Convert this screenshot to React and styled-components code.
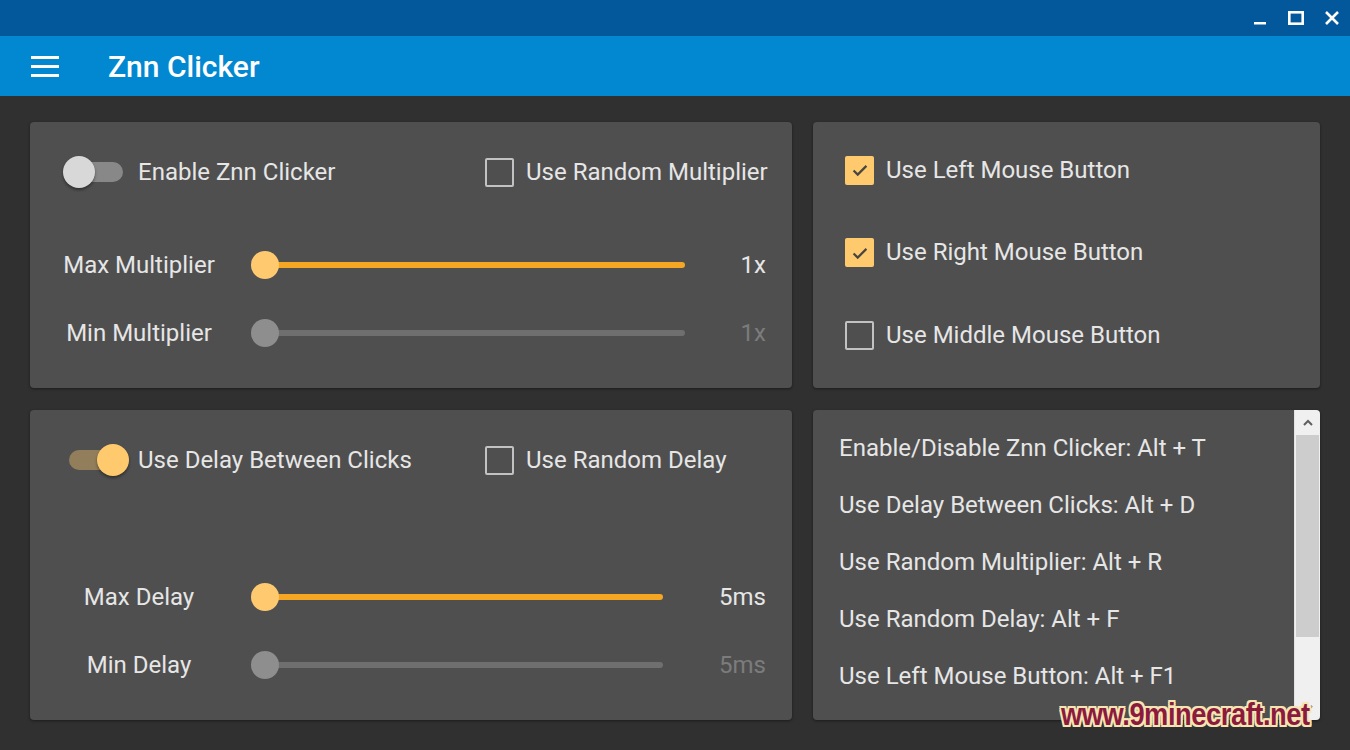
import React from 'react';
import styled, { createGlobalStyle } from 'styled-components';

const GlobalStyle = createGlobalStyle`
  body {
    margin: 0;
    background: #303030;
    font-family: Roboto, "Noto Sans", sans-serif;
  }
`;

const Window = styled.div`
  position: relative;
  width: 1350px;
  height: 750px;
  overflow: hidden;
  background: #303030;
  color: #e6e6e6;
`;

const TitleBar = styled.div`
  display: flex;
  justify-content: flex-end;
  height: 36px;
  background: #03579b;
`;

const WindowButton = styled.div`
  display: flex;
  align-items: center;
  justify-content: center;
  width: 36px;
  height: 36px;
  color: #ffffff;
`;

const AppBar = styled.header`
  display: flex;
  align-items: center;
  gap: 49px;
  height: 60px;
  padding-left: 31px;
  background: #0288d1;
  color: #ffffff;
`;

const MenuIcon = styled.div`
  display: flex;
  flex-direction: column;
  gap: 6px;
  width: 28px;

  span {
    height: 3px;
    background: #ffffff;
  }
`;

const Title = styled.h1`
  margin: 0;
  font-size: 30px;
  font-weight: 500;
`;

const Content = styled.main`
  display: grid;
  grid-template-columns: 762px 507px;
  grid-template-rows: 266px 310px;
  gap: 22px 21px;
  padding: 26px 30px 30px;
`;

const Card = styled.section`
  background: #4f4f4f;
  border-radius: 4px;
  box-shadow: 0 1px 3px rgba(0, 0, 0, 0.45);
`;

const SettingsCard = styled(Card)`
  display: flex;
  flex-direction: column;
  justify-content: space-between;
  padding: 30px 26px 35px 33px;
`;

const TopRow = styled.div`
  display: grid;
  grid-template-columns: 422px 1fr;
  align-items: center;
  height: 40px;
`;

const Label = styled.span`
  font-size: 24px;
  line-height: 1.2;
  color: #e6e6e6;
  white-space: nowrap;
`;

const ToggleRow = styled.div`
  display: flex;
  align-items: center;
  gap: 8px;
`;

const ToggleBox = styled.div`
  position: relative;
  width: 67px;
  height: 32px;
`;

const ToggleTrack = styled.div`
  position: absolute;
  left: 6px;
  right: 7px;
  top: 6px;
  height: 20px;
  border-radius: 10px;
  background: ${(p) => (p.$on ? '#927e5b' : '#888888')};
`;

const ToggleThumb = styled.div`
  position: absolute;
  top: 0;
  left: ${(p) => (p.$on ? '34px' : '0')};
  width: 32px;
  height: 32px;
  border-radius: 50%;
  background: ${(p) => (p.$on ? '#ffc96e' : '#d8d8d8')};
  box-shadow: 0 2px 3px rgba(0, 0, 0, 0.4);
`;

const CheckRow = styled.div`
  display: flex;
  align-items: center;
  gap: 12px;
  height: 40px;
`;

const Box = styled.div`
  box-sizing: border-box;
  display: flex;
  align-items: center;
  justify-content: center;
  flex-shrink: 0;
  width: 29px;
  height: 29px;
  border-radius: 2px;
  border: ${(p) => (p.$checked ? 'none' : '2px solid #c2c2c2')};
  background: ${(p) => (p.$checked ? '#ffca6e' : 'transparent')};
`;

const SliderGroup = styled.div`
  display: flex;
  flex-direction: column;
  gap: 28px;
`;

const SliderRow = styled.div`
  display: grid;
  grid-template-columns: 152px 1fr ${(p) => p.$valueWidth}px;
  align-items: center;
  height: 40px;
`;

const SliderLabel = styled(Label)`
  text-align: center;
`;

const SliderValue = styled(Label)`
  text-align: right;
  color: ${(p) => (p.$disabled ? '#7c7c7c' : '#e6e6e6')};
`;

const SliderBox = styled.div`
  position: relative;
  height: 28px;
  margin-left: 36px;
`;

const Track = styled.div`
  position: absolute;
  left: 14px;
  right: 14px;
  top: 11px;
  height: 6px;
  border-radius: 3px;
  background: ${(p) => (p.$disabled ? '#6f6f6f' : '#f5a623')};
`;

const Thumb = styled.div`
  position: absolute;
  top: 0;
  width: 28px;
  height: 28px;
  border-radius: 50%;
  background: ${(p) => (p.$disabled ? '#8e8e8e' : '#ffc970')};
`;

const MouseCard = styled(Card)`
  display: flex;
  flex-direction: column;
  justify-content: space-between;
  padding: 28px 32px 33px;
`;

const HotkeyCard = styled(Card)`
  display: flex;
  overflow: hidden;
`;

const HotkeyList = styled.ul`
  flex: 1;
  margin: 0;
  padding: 9px 26px;
  list-style: none;
  overflow: hidden;
`;

const HotkeyItem = styled.li`
  display: flex;
  align-items: center;
  height: 57px;
  font-size: 24px;
  color: #e6e6e6;
  white-space: nowrap;
`;

const ScrollBar = styled.div`
  display: flex;
  flex-direction: column;
  width: 25px;
  background: #f0f0f0;
  border-left: 1px solid #e2e2e2;
`;

const ScrollArrow = styled.div`
  display: flex;
  align-items: center;
  justify-content: center;
  height: 25px;
  color: #5f5f5f;
`;

const ScrollTrack = styled.div`
  flex: 1;
  padding: 0 1px;
`;

const ScrollThumb = styled.div`
  height: 202px;
  background: #cdcdcd;
`;

const Watermark = styled.div`
  position: absolute;
  right: 40px;
  bottom: 17px;
  font-family: "Liberation Sans", Arial, sans-serif;
  font-size: 31px;
  font-weight: 700;
  letter-spacing: -0.5px;
  color: #8b1b3d;
  transform: scaleX(0.88);
  transform-origin: right center;
  text-shadow: -2px 0 #f6e5b2, 2px 0 #f6e5b2, 0 -2px #f6e5b2, 0 2px #f6e5b2,
    -2px -2px #f6e5b2, 2px 2px #f6e5b2, -2px 2px #f6e5b2, 2px -2px #f6e5b2;
`;

function Toggle({ on, label }) {
  return (
    <ToggleRow>
      <ToggleBox>
        <ToggleTrack $on={on} />
        <ToggleThumb $on={on} />
      </ToggleBox>
      <Label>{label}</Label>
    </ToggleRow>
  );
}

function Checkbox({ checked, label }) {
  return (
    <CheckRow>
      <Box $checked={checked}>
        {checked && (
          <svg width="22" height="22" viewBox="0 0 24 24" fill="none" stroke="#474542" strokeWidth="2.4">
            <path d="M5 12.5l4.5 4.5L19 7.5" />
          </svg>
        )}
      </Box>
      <Label>{label}</Label>
    </CheckRow>
  );
}

function Slider({ label, value, disabled, valueWidth, percent = 0 }) {
  return (
    <SliderRow $valueWidth={valueWidth}>
      <SliderLabel>{label}</SliderLabel>
      <SliderBox>
        <Track $disabled={disabled} />
        <Thumb $disabled={disabled} style={{ left: `calc((100% - 28px) * ${percent / 100})` }} />
      </SliderBox>
      <SliderValue $disabled={disabled}>{value}</SliderValue>
    </SliderRow>
  );
}

const hotkeys = [
  'Enable/Disable Znn Clicker: Alt + T',
  'Use Delay Between Clicks: Alt + D',
  'Use Random Multiplier: Alt + R',
  'Use Random Delay: Alt + F',
  'Use Left Mouse Button: Alt + F1',
];

export default function App() {
  return (
    <Window>
      <GlobalStyle />
      <TitleBar>
        <WindowButton>
          <svg width="14" height="14" viewBox="0 0 14 14">
            <rect x="1" y="11" width="12" height="2.5" fill="currentColor" />
          </svg>
        </WindowButton>
        <WindowButton>
          <svg width="16" height="14" viewBox="0 0 16 14" fill="none" stroke="currentColor" strokeWidth="2.6">
            <rect x="1.3" y="1.3" width="13.4" height="11.4" />
          </svg>
        </WindowButton>
        <WindowButton>
          <svg width="14" height="14" viewBox="0 0 14 14" stroke="currentColor" strokeWidth="2.6">
            <path d="M1 1l12 12M13 1L1 13" />
          </svg>
        </WindowButton>
      </TitleBar>
      <AppBar>
        <MenuIcon>
          <span />
          <span />
          <span />
        </MenuIcon>
        <Title>Znn Clicker</Title>
      </AppBar>
      <Content>
        <SettingsCard>
          <TopRow>
            <Toggle on={false} label="Enable Znn Clicker" />
            <Checkbox checked={false} label="Use Random Multiplier" />
          </TopRow>
          <SliderGroup>
            <Slider label="Max Multiplier" value="1x" valueWidth={67} />
            <Slider label="Min Multiplier" value="1x" valueWidth={67} disabled />
          </SliderGroup>
        </SettingsCard>
        <MouseCard>
          <Checkbox checked label="Use Left Mouse Button" />
          <Checkbox checked label="Use Right Mouse Button" />
          <Checkbox checked={false} label="Use Middle Mouse Button" />
        </MouseCard>
        <SettingsCard>
          <TopRow>
            <Toggle on label="Use Delay Between Clicks" />
            <Checkbox checked={false} label="Use Random Delay" />
          </TopRow>
          <SliderGroup>
            <Slider label="Max Delay" value="5ms" valueWidth={89} />
            <Slider label="Min Delay" value="5ms" valueWidth={89} disabled />
          </SliderGroup>
        </SettingsCard>
        <HotkeyCard>
          <HotkeyList>
            {hotkeys.map((h) => (
              <HotkeyItem key={h}>{h}</HotkeyItem>
            ))}
          </HotkeyList>
          <ScrollBar>
            <ScrollArrow>
              <svg width="10" height="8" viewBox="0 0 10 8" fill="none" stroke="currentColor" strokeWidth="2">
                <path d="M1 6l4-4 4 4" />
              </svg>
            </ScrollArrow>
            <ScrollTrack>
              <ScrollThumb />
            </ScrollTrack>
            <ScrollArrow>
              <svg width="10" height="8" viewBox="0 0 10 8" fill="none" stroke="currentColor" strokeWidth="2">
                <path d="M1 2l4 4 4-4" />
              </svg>
            </ScrollArrow>
          </ScrollBar>
        </HotkeyCard>
      </Content>
      <Watermark>www.9minecraft.net</Watermark>
    </Window>
  );
}
